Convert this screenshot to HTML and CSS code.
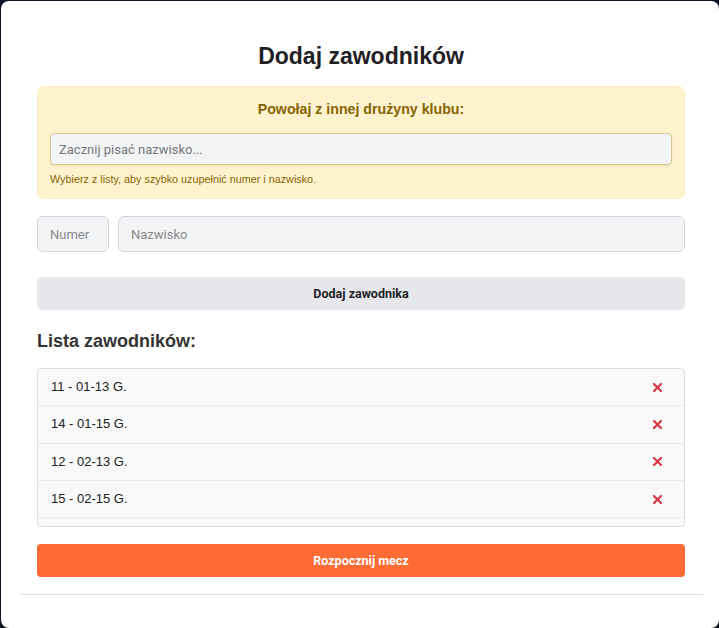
FILE: index.html
```html
<!DOCTYPE html>
<html lang="pl">
<head>
<meta charset="utf-8">
<title>Dodaj zawodników</title>
<link rel="stylesheet" href="styles.css">
</head>
<body>
<div class="modal">
  <h2 class="title">Dodaj zawodników</h2>

  <div class="callup">
    <h3 class="callup-title">Powołaj z innej drużyny klubu:</h3>
    <input class="callup-input" type="text" placeholder="Zacznij pisać nazwisko...">
    <p class="callup-hint">Wybierz z listy, aby szybko uzupełnić numer i nazwisko.</p>
  </div>

  <div class="add-row">
    <input class="field field-num" type="text" placeholder="Numer">
    <input class="field field-name" type="text" placeholder="Nazwisko">
  </div>

  <button class="btn btn-add" type="button">Dodaj zawodnika</button>

  <h3 class="list-title">Lista zawodników:</h3>

  <ul class="players">
    <li class="player"><span>11 - 01-13 G.</span><button class="remove" type="button" aria-label="Usuń"><svg width="9" height="9" viewBox="0 0 9 9"><path d="M1 1L8 8M8 1L1 8" stroke="#dc3545" stroke-width="2.2" stroke-linecap="square"/></svg></button></li>
    <li class="player"><span>14 - 01-15 G.</span><button class="remove" type="button" aria-label="Usuń"><svg width="9" height="9" viewBox="0 0 9 9"><path d="M1 1L8 8M8 1L1 8" stroke="#dc3545" stroke-width="2.2" stroke-linecap="square"/></svg></button></li>
    <li class="player"><span>12 - 02-13 G.</span><button class="remove" type="button" aria-label="Usuń"><svg width="9" height="9" viewBox="0 0 9 9"><path d="M1 1L8 8M8 1L1 8" stroke="#dc3545" stroke-width="2.2" stroke-linecap="square"/></svg></button></li>
    <li class="player"><span>15 - 02-15 G.</span><button class="remove" type="button" aria-label="Usuń"><svg width="9" height="9" viewBox="0 0 9 9"><path d="M1 1L8 8M8 1L1 8" stroke="#dc3545" stroke-width="2.2" stroke-linecap="square"/></svg></button></li>
  </ul>

  <button class="btn btn-start" type="button">Rozpocznij mecz</button>

  <hr class="divider">
</div>
</body>
</html>
```

FILE: styles.css
```css
html, body {
  margin: 0;
  padding: 0;
  height: 100%;
  overflow: hidden;
}

body {
  background: #0d1425;
  font-family: "Liberation Sans", Arial, sans-serif;
  color: #333;
}

.modal {
  box-sizing: border-box;
  margin: 1px 0 0 1px;
  height: 627px;
  background: #fff;
  border-radius: 8px;
  padding: 0 34px 0 36px;
  display: flex;
  flex-direction: column;
  overflow: hidden;
}

.title {
  margin: 41px 0 0;
  font-size: 23px;
  line-height: 28px;
  font-weight: 700;
  text-align: center;
  color: #1f2023;
}

.callup {
  margin-top: 16px;
  background: #fff3cd;
  border: 1px solid #ffeeba;
  border-radius: 7px;
  padding: 14px 12px 12px;
  display: flex;
  flex-direction: column;
}

.callup-title {
  margin: 0;
  font-size: 14.2px;
  line-height: 17px;
  font-weight: 700;
  text-align: center;
  color: #856404;
}

.callup-input {
  box-sizing: border-box;
  margin-top: 15px;
  height: 32px;
  width: 100%;
  background: #f3f4f6;
  border: 1px solid #d8c991;
  border-radius: 4px;
  box-shadow: 0 1px 2px rgba(133, 100, 4, 0.15);
  padding: 0 8px;
  font-family: Roboto, "Liberation Sans", sans-serif;
  font-size: 13px;
  color: #333;
  outline: none;
}

.callup-input::placeholder {
  color: #777;
}

.callup-hint {
  margin: 8px 0 0;
  font-size: 10.8px;
  line-height: 13px;
  color: #856404;
}

.add-row {
  margin-top: 17px;
  display: flex;
  gap: 9px;
}

.field {
  box-sizing: border-box;
  height: 36px;
  background: #f3f4f6;
  border: 1px solid #d1d5db;
  border-radius: 6px;
  padding: 0 12px;
  font-family: Roboto, "Liberation Sans", sans-serif;
  font-size: 13px;
  color: #333;
  outline: none;
}

.field::placeholder {
  color: #8a8a8a;
}

.field-num {
  width: 72px;
  flex: none;
}

.field-name {
  flex: 1;
  min-width: 0;
}

.btn {
  box-sizing: border-box;
  width: 100%;
  height: 33px;
  border: none;
  border-radius: 5px;
  font-family: Roboto, "Liberation Sans", sans-serif;
  font-size: 12.5px;
  font-weight: 700;
  cursor: pointer;
}

.btn-add {
  margin-top: 25px;
  background: #e5e7eb;
  color: #1f2328;
}

.list-title {
  margin: 21px 0 0;
  font-size: 18px;
  line-height: 21px;
  font-weight: 700;
  color: #333;
}

.players {
  box-sizing: border-box;
  margin: 16px 0 0;
  padding: 0;
  list-style: none;
  height: 159px;
  overflow-y: auto;
  scrollbar-width: none;
  background: #f9f9f9;
  border: 1px solid #ddd;
  border-radius: 4px;
}

.player {
  display: flex;
  align-items: center;
  justify-content: space-between;
  padding: 10px 22px 10px 13px;
  line-height: 16.33px;
  font-size: 13px;
  color: #222;
  border-bottom: 1px solid #eaeaea;
}

.remove {
  display: flex;
  align-items: center;
  justify-content: center;
  padding: 0;
  border: none;
  background: none;
  cursor: pointer;
}

.btn-start {
  margin-top: 17px;
  background: #ff6b35;
  color: #fff;
  border-radius: 4px;
}

.divider {
  margin: 17px -18px 0 -16px;
  border: none;
  border-top: 1px solid #dddddd;
  height: 0;
}
```
